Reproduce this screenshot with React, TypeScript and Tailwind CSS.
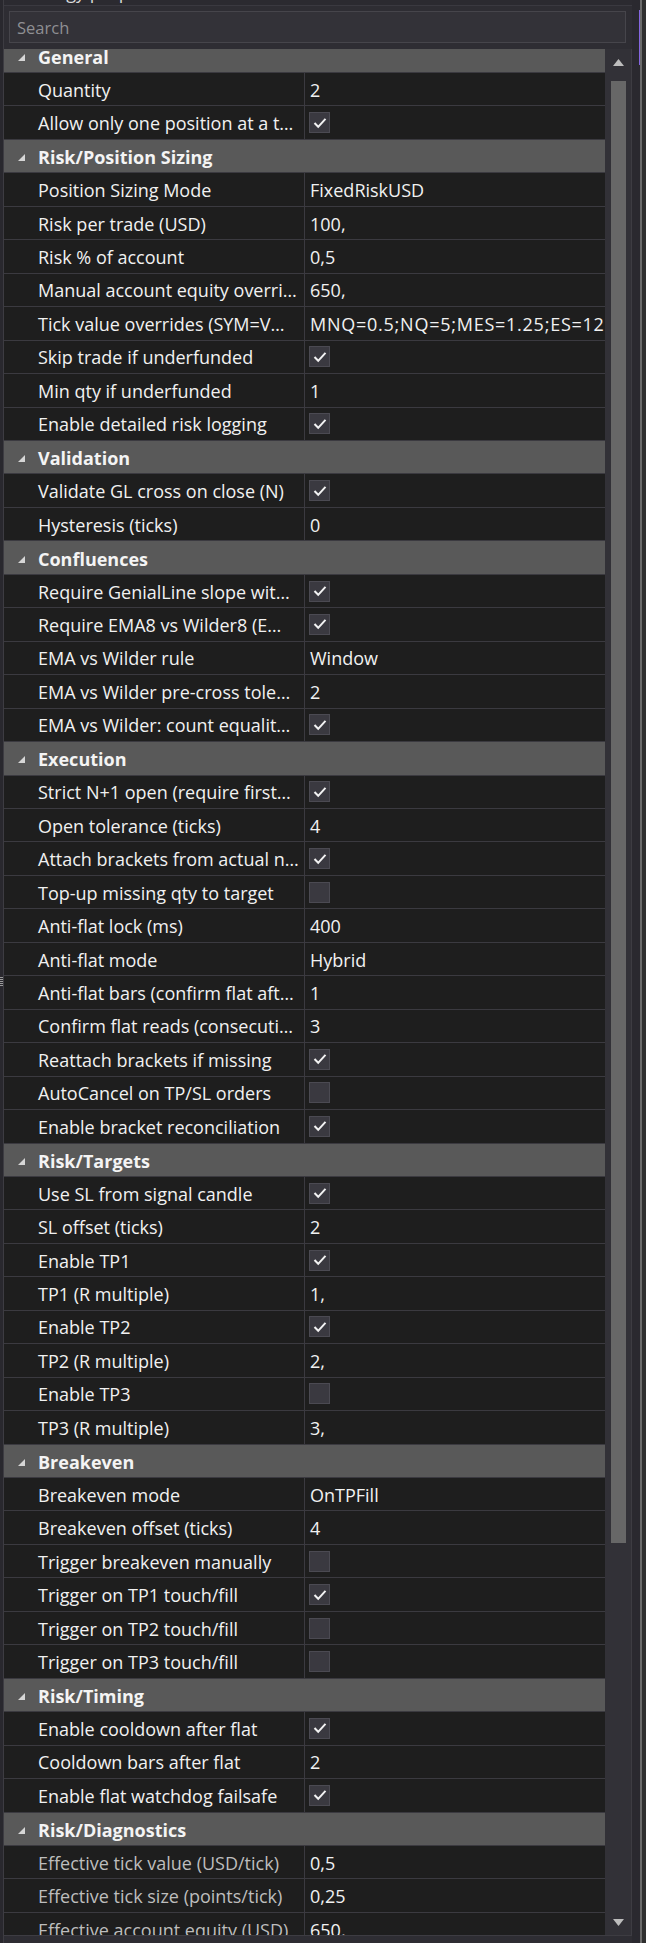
import React from 'react'

type Row = { name: string; value?: string; check?: boolean; wide?: boolean }
type Section = { title: string; rows: Row[]; readOnly?: boolean }

const sections: Section[] = [
  { title: 'General', rows: [
    { name: 'Quantity', value: '2' },
    { name: 'Allow only one position at a t…', check: true },
  ]},
  { title: 'Risk/Position Sizing', rows: [
    { name: 'Position Sizing Mode', value: 'FixedRiskUSD' },
    { name: 'Risk per trade (USD)', value: '100,' },
    { name: 'Risk % of account', value: '0,5' },
    { name: 'Manual account equity overri…', value: '650,' },
    { name: 'Tick value overrides (SYM=V…', value: 'MNQ=0.5;NQ=5;MES=1.25;ES=12.5', wide: true },
    { name: 'Skip trade if underfunded', check: true },
    { name: 'Min qty if underfunded', value: '1' },
    { name: 'Enable detailed risk logging', check: true },
  ]},
  { title: 'Validation', rows: [
    { name: 'Validate GL cross on close (N)', check: true },
    { name: 'Hysteresis (ticks)', value: '0' },
  ]},
  { title: 'Confluences', rows: [
    { name: 'Require GenialLine slope wit…', check: true },
    { name: 'Require EMA8 vs Wilder8 (E…', check: true },
    { name: 'EMA vs Wilder rule', value: 'Window' },
    { name: 'EMA vs Wilder pre-cross tole…', value: '2' },
    { name: 'EMA vs Wilder: count equalit…', check: true },
  ]},
  { title: 'Execution', rows: [
    { name: 'Strict N+1 open (require first…', check: true },
    { name: 'Open tolerance (ticks)', value: '4' },
    { name: 'Attach brackets from actual n…', check: true },
    { name: 'Top-up missing qty to target', check: false },
    { name: 'Anti-flat lock (ms)', value: '400' },
    { name: 'Anti-flat mode', value: 'Hybrid' },
    { name: 'Anti-flat bars (confirm flat aft…', value: '1' },
    { name: 'Confirm flat reads (consecuti…', value: '3' },
    { name: 'Reattach brackets if missing', check: true },
    { name: 'AutoCancel on TP/SL orders', check: false },
    { name: 'Enable bracket reconciliation', check: true },
  ]},
  { title: 'Risk/Targets', rows: [
    { name: 'Use SL from signal candle', check: true },
    { name: 'SL offset (ticks)', value: '2' },
    { name: 'Enable TP1', check: true },
    { name: 'TP1 (R multiple)', value: '1,' },
    { name: 'Enable TP2', check: true },
    { name: 'TP2 (R multiple)', value: '2,' },
    { name: 'Enable TP3', check: false },
    { name: 'TP3 (R multiple)', value: '3,' },
  ]},
  { title: 'Breakeven', rows: [
    { name: 'Breakeven mode', value: 'OnTPFill' },
    { name: 'Breakeven offset (ticks)', value: '4' },
    { name: 'Trigger breakeven manually', check: false },
    { name: 'Trigger on TP1 touch/fill', check: true },
    { name: 'Trigger on TP2 touch/fill', check: false },
    { name: 'Trigger on TP3 touch/fill', check: false },
  ]},
  { title: 'Risk/Timing', rows: [
    { name: 'Enable cooldown after flat', check: true },
    { name: 'Cooldown bars after flat', value: '2' },
    { name: 'Enable flat watchdog failsafe', check: true },
  ]},
  { title: 'Risk/Diagnostics', readOnly: true, rows: [
    { name: 'Effective tick value (USD/tick)', value: '0,5' },
    { name: 'Effective tick size (points/tick)', value: '0,25' },
    { name: 'Effective account equity (USD)', value: '650,' },
  ]},
]

function Box({ on }: { on: boolean }) {
  return (
    <div className="w-[21px] h-[21px] bg-[#3a3940] border border-[#4b4a52] flex items-center justify-center">
      {on && (
        <svg width="14" height="12" viewBox="0 0 14 12">
          <path d="M1.5 6 L5.2 9.8 L12.5 1.8" fill="none" stroke="#f2f2f2" strokeWidth="2" />
        </svg>
      )}
    </div>
  )
}

function Header({ title }: { title: string }) {
  return (
    <div className="h-[33.46px] bg-[#595959] border-b border-[#3b3a40] flex items-center pl-[14px]">
      <svg width="7" height="7" viewBox="0 0 7 7" className="mt-[3px]">
        <polygon points="7,0 7,7 0,7" fill="#d6d6d6" />
      </svg>
      <span className="ml-[13px] pt-[3px] font-bold text-[#f4f4f4]">{title}</span>
    </div>
  )
}

function Item({ row, readOnly }: { row: Row; readOnly?: boolean }) {
  return (
    <div className="h-[33.46px] flex border-b border-[#3b3a40]">
      <div className={`w-[301px] shrink-0 pl-[34px] pt-[2px] border-r border-[#3b3a40] flex items-center overflow-hidden whitespace-nowrap ${readOnly ? 'text-[#bdbdbd]' : 'text-[#f1f1f1]'}`}>
        {row.name}
      </div>
      {row.check !== undefined ? (
        <div className="flex-1 pl-[4px] flex items-center"><Box on={row.check} /></div>
      ) : (
        <div className={`flex-1 pl-[5px] pt-[2px] flex items-center overflow-hidden whitespace-nowrap text-[#f1f1f1] ${row.wide ? 'tracking-[0.75px]' : ''}`}>{row.value}</div>
      )}
    </div>
  )
}

export default function App() {
  return (
    <div className="w-[646px] h-[1943px] overflow-hidden bg-[#2b2a30] flex relative font-['Open_Sans',sans-serif] text-[18px]">
      <div className="w-[4px] shrink-0 bg-[#29282e] border-r border-[#3d3c42]" />
      <div className="absolute left-0 top-[977px] flex flex-col gap-[1px]">
        {[0, 1, 2, 3, 4].map(i => <div key={i} className="w-[3px] h-[1px] bg-[#9a9a9a]" />)}
      </div>

      <div className="w-[628px] shrink-0 flex flex-col bg-[#2e2d33]">
        <div className="h-[6px] overflow-hidden border-b border-[#3a3940] bg-[#2b2a30]">
          <div className="-mt-[18px] pl-[12px] leading-[20px] text-[#d8d8d8] whitespace-nowrap">Strategy properties</div>
        </div>
        <div className="h-[43px] pt-[5px]">
          <div className="ml-[5px] w-[617px] h-[32px] bg-[#333238] border border-[#46454b] flex items-center pl-[7px] pt-[2px] text-[16.5px] text-[#8f8f93]">
            Search
          </div>
        </div>
        <div className="h-[1886px] flex">
          <div className="w-[601px] h-full overflow-hidden bg-[#1e1e1e]">
            <div className="-mt-[9.46px]">
              {sections.map(s => (
                <div key={s.title}>
                  <Header title={s.title} />
                  {s.rows.map(r => <Item key={r.name} row={r} readOnly={s.readOnly} />)}
                </div>
              ))}
            </div>
          </div>
          <div className="w-[27px] h-full bg-[#323137] border-r border-[#3d3c42] flex flex-col items-center">
            <div className="h-[26px] flex items-center justify-center">
              <svg width="11" height="7" viewBox="0 0 11 7"><polygon points="5.5,0 11,7 0,7" fill="#bdbdbd" /></svg>
            </div>
            <div className="mt-[6px] w-[15px] h-[1462px] bg-[#676767]" />
            <div className="flex-1" />
            <div className="h-[26px] flex items-center justify-center">
              <svg width="11" height="7" viewBox="0 0 11 7"><polygon points="0,0 11,0 5.5,7" fill="#bdbdbd" /></svg>
            </div>
          </div>
        </div>
        <div className="flex-1 border-t border-[#3d3c42] bg-[#2e2d33]" />
      </div>

      <div className="flex-1 flex bg-[#2a292f]">
        <div className="w-[7px]" />
        <div className="w-[1px] relative">
          <div className="absolute top-[10px] left-0 w-[1px] h-[55px] bg-[#8466e0]" />
        </div>
        <div className="w-[2px] bg-[#6b6b6b]" />
        <div className="flex-1 bg-[#2f2f2f]" />
      </div>
    </div>
  )
}
